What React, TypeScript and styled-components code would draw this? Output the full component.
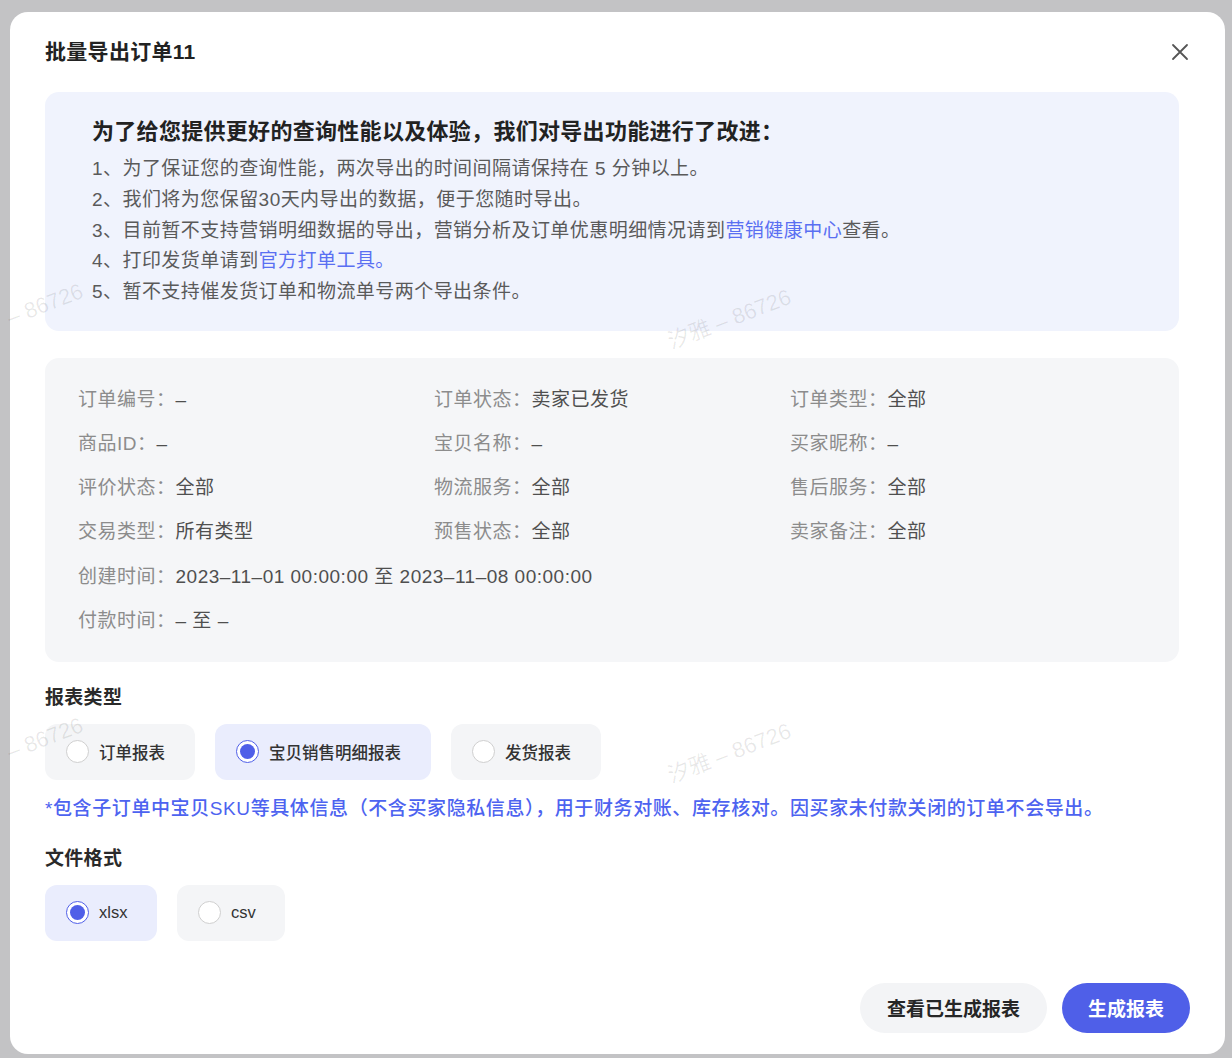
import React from 'react';
import styled, { createGlobalStyle } from 'styled-components';

const GlobalStyle = createGlobalStyle`
  html, body {
    margin: 0;
    height: 100%;
    overflow: hidden;
  }
  body {
    background: #c3c3c5;
    font-family: 'Liberation Sans', 'Noto Sans CJK SC', sans-serif;
    color: #333;
  }
  * { box-sizing: border-box; }
`;

const Page = styled.div`
  position: relative;
  height: 100vh;
  padding: 12px 7px 0 10px;
  overflow: hidden;
`;

const Modal = styled.div`
  width: 1215px;
  background: #ffffff;
  border-radius: 18px;
  padding: 24px 0 21px 35px;
  display: flex;
  flex-direction: column;
`;

const Header = styled.div`
  display: flex;
  align-items: center;
  justify-content: space-between;
  padding-right: 36px;
  height: 32px;
`;

const Title = styled.h1`
  margin: 0;
  font-size: 21px;
  font-weight: 700;
  color: #222;
  line-height: 32px;
  letter-spacing: 0.3px;
`;

const CloseButton = styled.button`
  border: 0;
  background: transparent;
  padding: 0;
  width: 18px;
  height: 18px;
  display: flex;
  align-items: center;
  justify-content: center;
  cursor: pointer;
`;

const Body = styled.div`
  width: 1134px;
  display: flex;
  flex-direction: column;
`;

const Notice = styled.div`
  margin-top: 24px;
  background: #f0f3fd;
  border-radius: 14px;
  padding: 25px 47px 23px;
`;

const NoticeTitle = styled.div`
  font-size: 22px;
  font-weight: 600;
  color: #222;
  line-height: 30px;
  margin-bottom: 7px;
  letter-spacing: 0.3px;
`;

const NoticeLine = styled.div`
  font-size: 19px;
  line-height: 30.75px;
  color: #5a5a5a;
  letter-spacing: 0.45px;
`;

const Link = styled.a`
  color: #5a6ff2;
  text-decoration: none;
`;

const Detail = styled.div`
  margin-top: 27px;
  background: #f5f6f8;
  border-radius: 14px;
  padding: 30px 33px 29px;
  display: grid;
  grid-template-columns: 356px 356px 1fr;
  row-gap: 20.2px;
`;

const Field = styled.div<{ $wide?: boolean }>`
  grid-column: ${p => (p.$wide ? '1 / -1' : 'auto')};
  font-size: 19px;
  line-height: 24px;
  letter-spacing: 0.5px;
  white-space: nowrap;
`;

const FieldLabel = styled.span`
  color: #8c8c8c;
`;

const FieldValue = styled.span`
  color: #4f4f4f;
`;

const SectionLabel = styled.div<{ $top: number }>`
  margin-top: ${p => p.$top}px;
  font-size: 19px;
  font-weight: 600;
  color: #2a2a2a;
  line-height: 24px;
  letter-spacing: 0.3px;
`;

const OptionRow = styled.div`
  margin-top: 14px;
  display: flex;
  gap: 20px;
`;

const OptionCard = styled.label<{ $width: number; $active?: boolean }>`
  width: ${p => p.$width}px;
  height: 56px;
  border-radius: 12px;
  background: ${p => (p.$active ? '#eaedfd' : '#f4f5f7')};
  display: flex;
  align-items: center;
  gap: 10px;
  padding-left: 21px;
  cursor: pointer;
  font-size: 16.5px;
  font-weight: 500;
  color: #333;
`;

const Radio = styled.span<{ $checked?: boolean }>`
  width: 23px;
  height: 23px;
  border-radius: 50%;
  flex-shrink: 0;
  background: #fff;
  border: ${p => (p.$checked ? '1.5px solid #4f5fe8' : '1px solid #cfcfcf')};
  display: flex;
  align-items: center;
  justify-content: center;

  &::after {
    content: '';
    display: ${p => (p.$checked ? 'block' : 'none')};
    width: 15px;
    height: 15px;
    border-radius: 50%;
    background: #4f5fe8;
  }
`;

const Hint = styled.div`
  margin-top: 17px;
  font-size: 19px;
  line-height: 24px;
  color: #4d63f0;
  font-weight: 500;
  letter-spacing: 0.6px;
`;

const Footer = styled.div`
  margin-top: 42px;
  display: flex;
  justify-content: flex-end;
  gap: 15px;
  padding-right: 35px;
`;

const Button = styled.button<{ $primary?: boolean }>`
  height: 50px;
  border: 0;
  border-radius: 25px;
  padding: 0 ${p => (p.$primary ? 26 : 27)}px;
  font-family: inherit;
  font-size: 19px;
  font-weight: 600;
  cursor: pointer;
  background: ${p => (p.$primary ? '#4f5fe8' : '#f3f4f6')};
  color: ${p => (p.$primary ? '#ffffff' : '#262626')};
`;

const Watermark = styled.div<{ $x: number; $y: number }>`
  position: absolute;
  left: ${p => p.$x}px;
  top: ${p => p.$y}px;
  transform: rotate(-21deg);
  transform-origin: left center;
  font-size: 22px;
  color: rgba(0, 0, 0, 0.09);
  pointer-events: none;
  white-space: nowrap;
`;

const fields: { label: string; value: string; wide?: boolean }[] = [
  { label: '订单编号：', value: '–' },
  { label: '订单状态：', value: '卖家已发货' },
  { label: '订单类型：', value: '全部' },
  { label: '商品ID：', value: '–' },
  { label: '宝贝名称：', value: '–' },
  { label: '买家昵称：', value: '–' },
  { label: '评价状态：', value: '全部' },
  { label: '物流服务：', value: '全部' },
  { label: '售后服务：', value: '全部' },
  { label: '交易类型：', value: '所有类型' },
  { label: '预售状态：', value: '全部' },
  { label: '卖家备注：', value: '全部' },
  { label: '创建时间：', value: '2023–11–01 00:00:00 至 2023–11–08 00:00:00', wide: true },
  { label: '付款时间：', value: '– 至 –', wide: true },
];

const reportTypes = [
  { label: '订单报表', width: 150 },
  { label: '宝贝销售明细报表', width: 216 },
  { label: '发货报表', width: 150 },
];

const formats = [
  { label: 'xlsx', width: 112 },
  { label: 'csv', width: 108 },
];

export default function App() {
  const [report, setReport] = React.useState('宝贝销售明细报表');
  const [format, setFormat] = React.useState('xlsx');

  return (
    <Page>
      <GlobalStyle />
      <Modal>
        <Header>
          <Title>批量导出订单11</Title>
          <CloseButton aria-label="关闭">
            <svg width="18" height="18" viewBox="0 0 18 18">
              <path d="M2 2L16 16M16 2L2 16" stroke="#555" strokeWidth="1.8" strokeLinecap="round" />
            </svg>
          </CloseButton>
        </Header>
        <Body>
          <Notice>
            <NoticeTitle>为了给您提供更好的查询性能以及体验，我们对导出功能进行了改进：</NoticeTitle>
            <NoticeLine>1、为了保证您的查询性能，两次导出的时间间隔请保持在 5 分钟以上。</NoticeLine>
            <NoticeLine>2、我们将为您保留30天内导出的数据，便于您随时导出。</NoticeLine>
            <NoticeLine>
              3、目前暂不支持营销明细数据的导出，营销分析及订单优惠明细情况请到<Link>营销健康中心</Link>查看。
            </NoticeLine>
            <NoticeLine>
              4、打印发货单请到<Link>官方打单工具。</Link>
            </NoticeLine>
            <NoticeLine>5、暂不支持催发货订单和物流单号两个导出条件。</NoticeLine>
          </Notice>

          <Detail>
            {fields.map(f => (
              <Field key={f.label} $wide={f.wide}>
                <FieldLabel>{f.label}</FieldLabel>
                <FieldValue>{f.value}</FieldValue>
              </Field>
            ))}
          </Detail>

          <SectionLabel $top={24}>报表类型</SectionLabel>
          <OptionRow>
            {reportTypes.map(r => (
              <OptionCard key={r.label} $width={r.width} $active={report === r.label} onClick={() => setReport(r.label)}>
                <Radio $checked={report === r.label} />
                {r.label}
              </OptionCard>
            ))}
          </OptionRow>
          <Hint>*包含子订单中宝贝SKU等具体信息（不含买家隐私信息），用于财务对账、库存核对。因买家未付款关闭的订单不会导出。</Hint>

          <SectionLabel $top={26}>文件格式</SectionLabel>
          <OptionRow>
            {formats.map(f => (
              <OptionCard key={f.label} $width={f.width} $active={format === f.label} onClick={() => setFormat(f.label)}>
                <Radio $checked={format === f.label} />
                {f.label}
              </OptionCard>
            ))}
          </OptionRow>
        </Body>
        <Footer>
          <Button>查看已生成报表</Button>
          <Button $primary>生成报表</Button>
        </Footer>
      </Modal>
      <Watermark $x={8} $y={306}>– 86726</Watermark>
      <Watermark $x={668} $y={324}>汐雅 – 86726</Watermark>
      <Watermark $x={8} $y={740}>– 86726</Watermark>
      <Watermark $x={668} $y={758}>汐雅 – 86726</Watermark>
    </Page>
  );
}
